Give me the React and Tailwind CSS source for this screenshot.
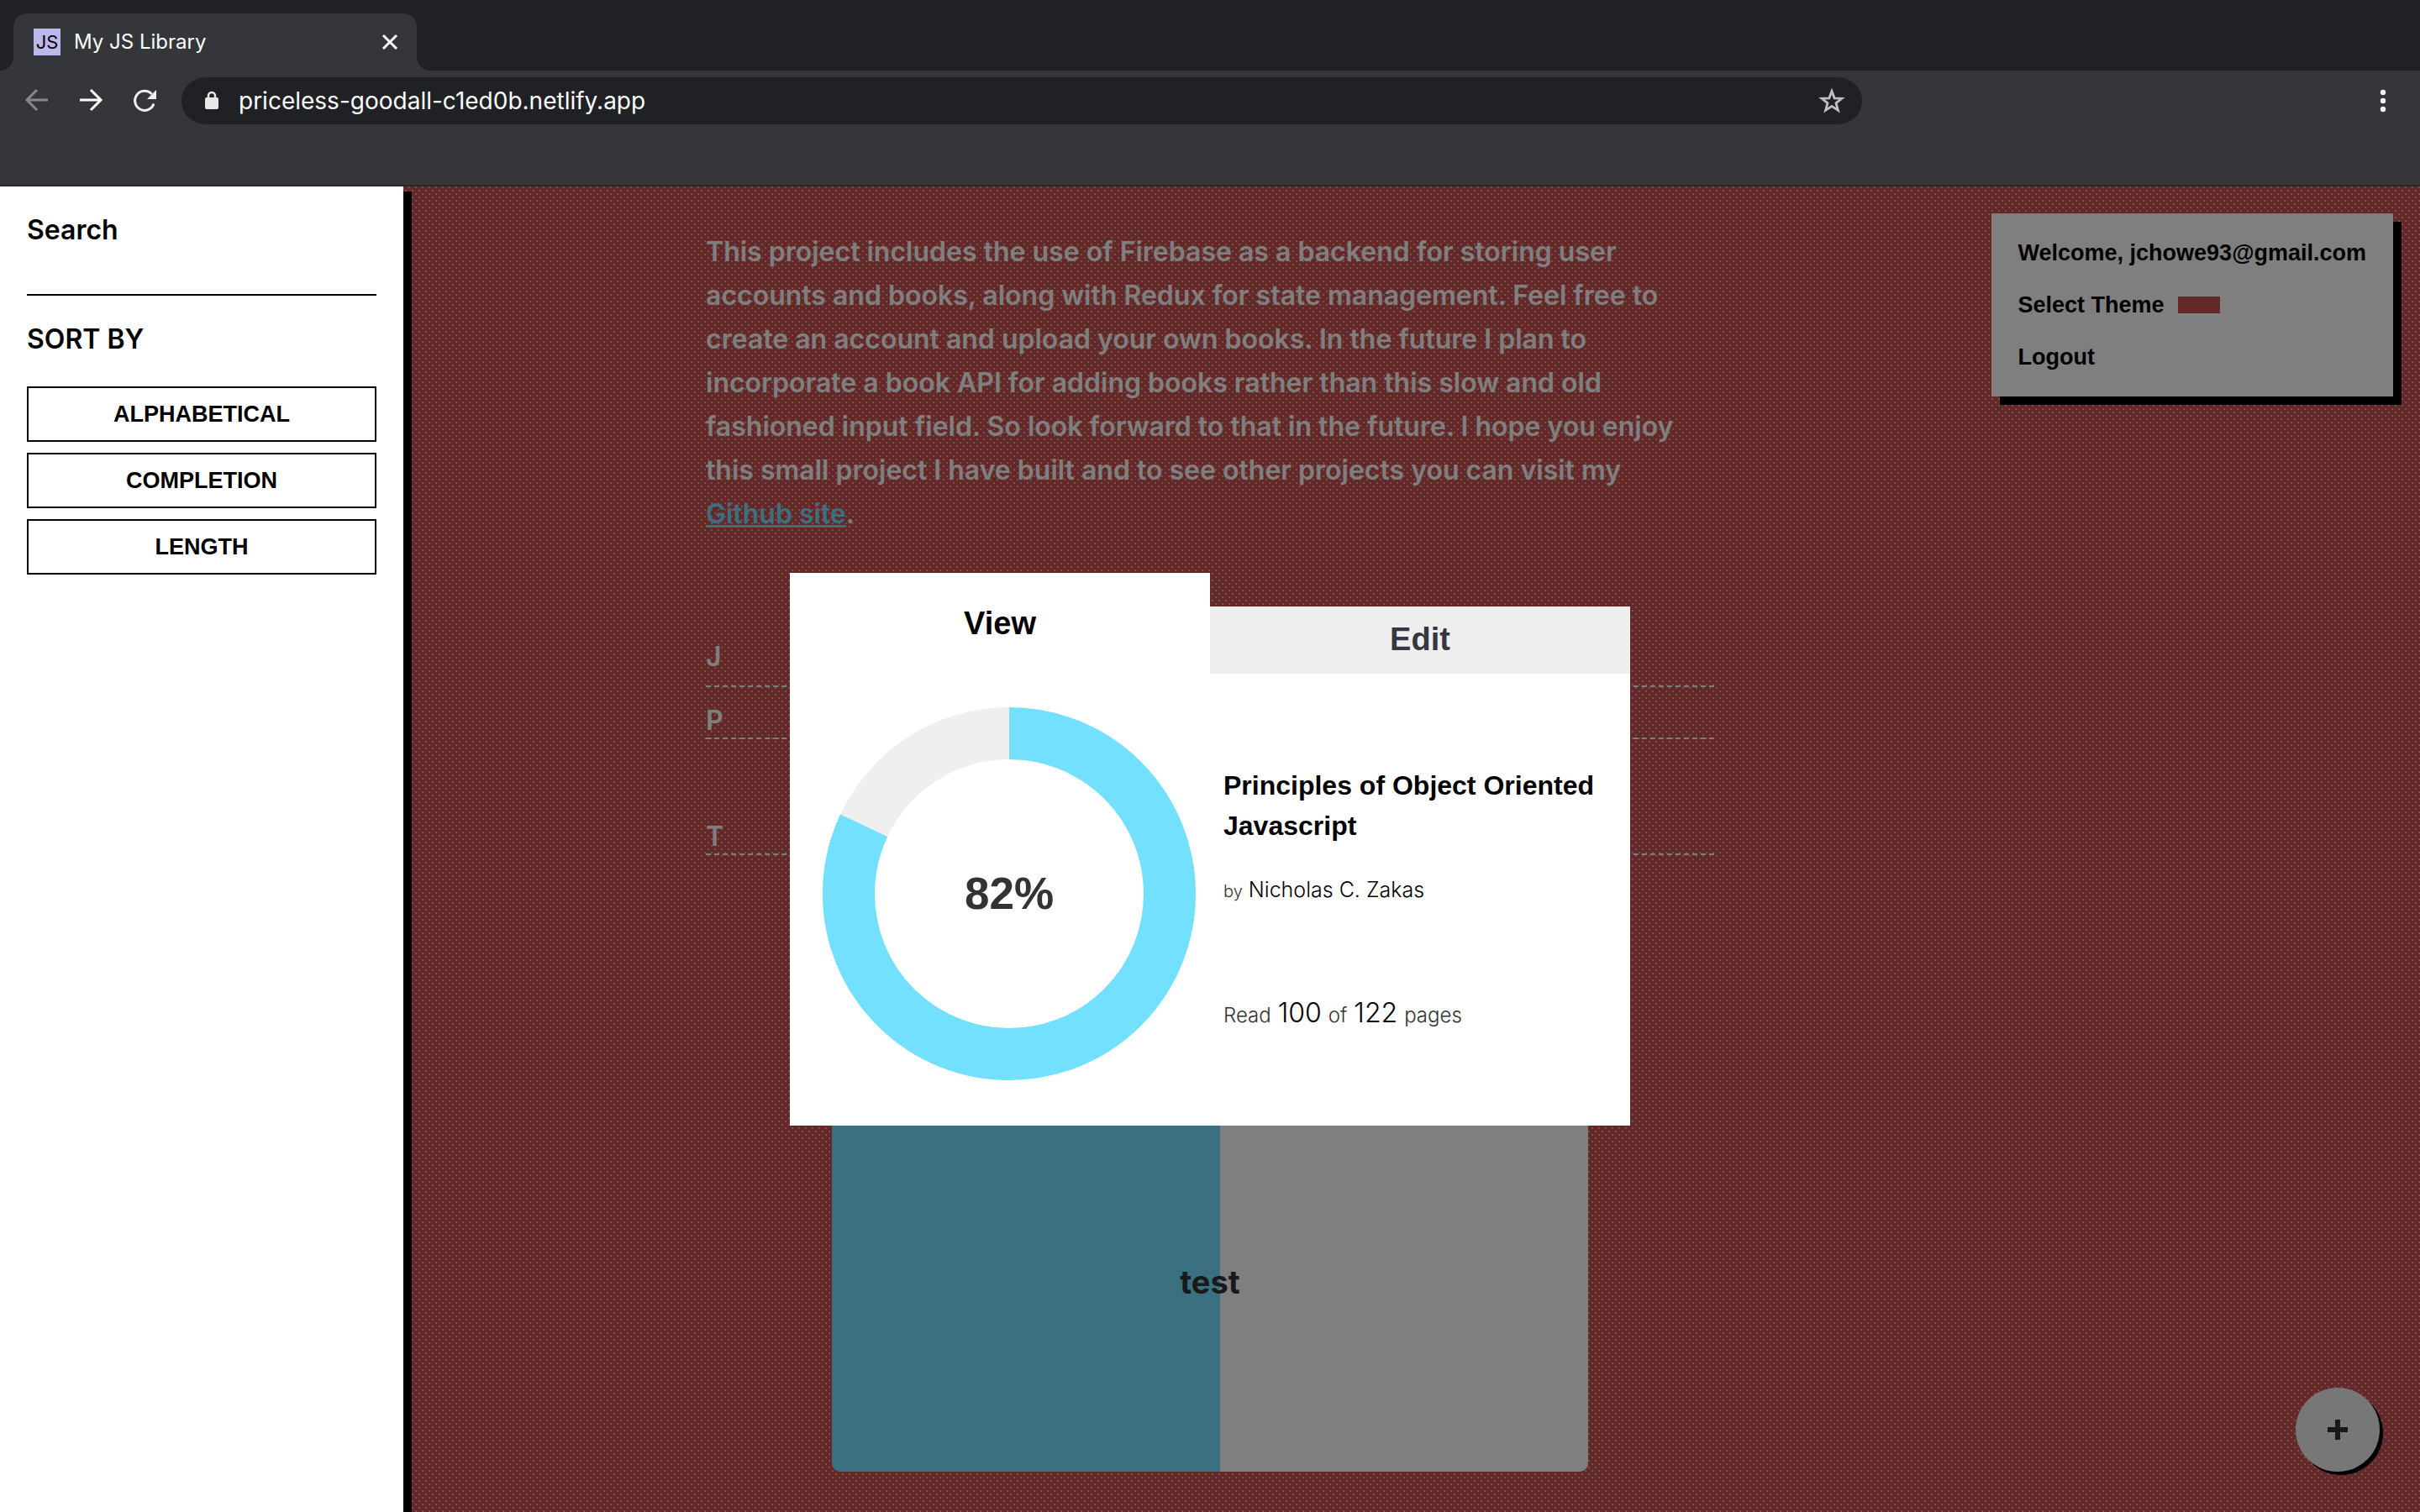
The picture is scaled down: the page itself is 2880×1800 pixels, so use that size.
function Chrome() {
  return (
    <header className="shrink-0 border-b-2 border-[#28292b] bg-[#35363a] font-[Inter,sans-serif]">
      <div className="flex h-[84px] items-end bg-[#202124] pl-4">
        <div className="relative flex h-[68px] w-[480px] items-center rounded-t-2xl bg-[#35363a] pr-5 pl-6 text-white">
          <svg className="absolute bottom-0 -left-4 size-4" viewBox="0 0 16 16" aria-hidden="true">
            <path d="M16 0v16H0A16 16 0 0 0 16 0z" fill="#35363a" />
          </svg>
          <svg className="absolute -right-4 bottom-0 size-4" viewBox="0 0 16 16" aria-hidden="true">
            <path d="M0 0v16h16A16 16 0 0 1 0 0z" fill="#35363a" />
          </svg>
          <span className="flex size-8 items-center justify-center bg-[#bbb8ea] text-[22px] text-black">JS</span>
          <span className="ml-4 text-[24px]">My JS Library</span>
          <button type="button" aria-label="Close tab" className="ml-auto">
            <svg className="size-6" viewBox="0 0 24 24" fill="none" stroke="currentColor" strokeWidth="3" aria-hidden="true">
              <path d="M4 4l16 16M20 4L4 20" />
            </svg>
          </button>
        </div>
      </div>
      <div className="flex h-[136px] items-start pt-2 pr-7 pl-7">
        <div className="flex h-14 w-full items-center">
          <button type="button" aria-label="Back" className="text-[#87888a]">
            <svg className="size-8" viewBox="0 0 32 32" fill="none" stroke="currentColor" strokeWidth="3" aria-hidden="true">
              <path d="M29 15H5M16 3L4 15l12 12" />
            </svg>
          </button>
          <button type="button" aria-label="Forward" className="ml-8 text-white">
            <svg className="size-8" viewBox="0 0 32 32" fill="none" stroke="currentColor" strokeWidth="3" aria-hidden="true">
              <path d="M3 15h24M16 3l12 12-12 12" />
            </svg>
          </button>
          <button type="button" aria-label="Reload" className="ml-8 text-[#f1f1f1]">
            <svg className="size-8" viewBox="0 0 32 32" fill="none" stroke="currentColor" strokeWidth="3" aria-hidden="true">
              <path d="M27 19.500A11.500 11.500 0 1 1 24.500 8" />
              <path d="M30 3v11H19z" fill="currentColor" stroke="none" />
            </svg>
          </button>
          <div className="ml-7 flex h-14 w-[71%] max-w-[2000px] items-center rounded-full bg-[#202124] pr-5 pl-7">
            <svg className="h-6 w-4 shrink-0" viewBox="0 0 16 24" fill="none" aria-hidden="true">
              <rect y="8" width="16" height="14" rx="2" fill="#e8e8e9" />
              <path d="M4 9V6a4 4 0 0 1 8 0v3" stroke="#e8e8e9" strokeWidth="2.500" />
            </svg>
            <input
              type="text"
              aria-label="Address"
              defaultValue="priceless-goodall-c1ed0b.netlify.app"
              className="ml-6 min-w-0 flex-1 bg-transparent text-[28px] text-white outline-none"
            />
            <button type="button" aria-label="Bookmark" className="text-[#bdc1c6]">
              <svg className="size-8" viewBox="0 0 32 32" fill="none" stroke="currentColor" strokeWidth="2.800" aria-hidden="true">
                <path d="M16 4.500l3.100 8.300 8.900.4-7 5.500 2.400 8.600L16 22.400l-7.400 4.900 2.400-8.600-7-5.500 8.900-.4z" />
              </svg>
            </button>
          </div>
          <button type="button" aria-label="Menu" className="ml-auto text-[#f1f1f1]">
            <svg className="size-8" viewBox="0 0 32 32" fill="currentColor" aria-hidden="true">
              <circle cx="16" cy="6" r="3.200" />
              <circle cx="16" cy="16" r="3.200" />
              <circle cx="16" cy="26" r="3.200" />
            </svg>
          </button>
        </div>
      </div>
    </header>
  );
}

function Sidebar() {
  return (
    <aside className="relative z-20 h-full w-[480px] bg-white px-8 pt-[26px] text-black shadow-[10px_6px_0_0_#000]">
      <label htmlFor="search" className="block font-[Inter,sans-serif] text-[32px] leading-[52px] font-semibold">
        Search
      </label>
      <input id="search" type="text" className="block h-[52px] w-full border-b-2 border-black text-[28px] outline-none" />
      <h2 className="mt-[26px] font-[Inter,sans-serif] text-[32px] leading-[52px] font-semibold">SORT BY</h2>
      <div className="mt-[30px] flex flex-col gap-[13px] font-['Liberation_Sans',sans-serif] text-[27px] leading-8 font-bold">
        <button type="button" className="h-[66px] border-2 border-black">ALPHABETICAL</button>
        <button type="button" className="h-[66px] border-2 border-black">COMPLETION</button>
        <button type="button" className="h-[66px] border-2 border-black">LENGTH</button>
      </div>
    </aside>
  );
}

function Donut({ read, total }) {
  const length = 2 * Math.PI * 191;
  const part = (read / total) * length;
  return (
    <div className="relative size-[446px]">
      <svg className="size-full -rotate-90" viewBox="0 0 446 446" fill="none" strokeWidth="62" aria-hidden="true">
        <circle cx="223" cy="223" r="191" stroke="#efefef" />
        <circle cx="223" cy="223" r="191" stroke="#74e0ff" strokeDasharray={`${part} ${length}`} />
      </svg>
      <p className="absolute inset-0 flex items-center justify-center text-[53px] font-bold text-[#333]">
        {Math.round((read / total) * 100)}%
      </p>
    </div>
  );
}

function BookModal() {
  return (
    <div className="absolute inset-0 z-10 flex items-center justify-center bg-black/50">
      <div role="dialog" aria-label="Book details" className="w-[1000px] font-['Liberation_Sans',sans-serif]">
        <div role="tablist" className="flex items-end text-[38px] font-bold">
          <button type="button" role="tab" aria-selected="true" className="h-[120px] flex-1 bg-white text-black">
            View
          </button>
          <button type="button" role="tab" aria-selected="false" className="h-20 flex-1 bg-[#eee] pb-0.5 text-[#35363f]">
            Edit
          </button>
        </div>
        <div className="flex bg-white pt-[39px] pb-[53px] pl-[38px]">
          <Donut read={100} total={122} />
          <div className="ml-8 flex-1 pt-[70px]">
            <h2 className="text-[32px] leading-[48px] font-bold text-black">
              Principles of Object Oriented
              <br />
              Javascript
            </h2>
            <p className="mt-[30px] font-[Inter,sans-serif] text-[25px] leading-[44px] font-light text-black">
              <span className="text-[20px] text-[#333]">by</span> Nicholas C. Zakas
            </p>
            <p className="mt-[101px] flex items-baseline gap-2 font-[Inter,sans-serif] text-[24px] leading-[44px] font-light text-[#333]">
              <span>Read</span>
              <span className="text-[32px] text-black">100</span>
              <span>of</span>
              <span className="text-[32px] text-black">122</span>
              <span>pages</span>
            </p>
          </div>
        </div>
      </div>
    </div>
  );
}

function AccountPanel() {
  return (
    <nav className="mt-8 mr-8 flex flex-col gap-[30px] justify-self-end self-start bg-white px-8 pt-[31px] pb-[31px] font-['Liberation_Sans',sans-serif] text-[27px] leading-8 font-bold text-black shadow-[10px_10px_0_0_#000]">
      <p>Welcome, jchowe93@gmail.com</p>
      <button type="button" className="flex items-center gap-4 text-left">
        Select Theme <span className="h-5 w-[50px] bg-[#c65252]" />
      </button>
      <button type="button" className="text-left">Logout</button>
    </nav>
  );
}

function Shelf({ letter, className }) {
  return (
    <h3 className={`border-b-2 border-dashed border-white text-[32px] leading-10 font-semibold ${className}`}>{letter}</h3>
  );
}

export default function App() {
  return (
    <div className="flex h-screen flex-col overflow-hidden">
      <Chrome />
      <div className="relative min-h-0 flex-1 overflow-hidden bg-[#c65252] bg-[conic-gradient(from_270deg_at_2px_2px,#f29e9c_90deg,transparent_0),conic-gradient(from_270deg_at_2px_2px,#f29e9c_90deg,transparent_0)] bg-size-[8px_8px] bg-position-[6px_0px,2px_4px]">
        <div className="grid h-full grid-cols-[1fr_1200px_1fr]">
          <Sidebar />
          <main className="flex flex-col pt-[52px] font-[Inter,sans-serif] text-white">
            <p className="text-[32px] leading-[52px] font-semibold">
              This project includes the use of Firebase as a backend for storing user
              <br />
              accounts and books, along with Redux for state management. Feel free to
              <br />
              create an account and upload your own books. In the future I plan to
              <br />
              incorporate a book API for adding books rather than this slow and old
              <br />
              fashioned input field. So look forward to that in the future. I hope you enjoy
              <br />
              this small project I have built and to see other projects you can visit my
              <br />
              <a href="#github" className="text-[#74e0ff] underline">
                Github site
              </a>
              .
            </p>
            <Shelf letter="J" className="mt-[124px] pb-3.5" />
            <Shelf letter="P" className="mt-5" />
            <Shelf letter="T" className="mt-24" />
            <button
              type="button"
              className="mx-[150px] mt-20 mb-12 flex min-h-0 flex-1 items-end justify-center rounded-[10px] bg-linear-to-r from-[#74e0ff] from-[462px] to-white to-[462px] pb-[197px] text-[38px] font-bold text-[#333]"
            >
              test
            </button>
          </main>
          <AccountPanel />
        </div>
        <button
          type="button"
          aria-label="Add book"
          className="absolute right-12 bottom-12 flex size-[100px] items-center justify-center rounded-full bg-[#efefef] text-[#333] shadow-[4px_4px_0_0_#000]"
        >
          <svg className="size-6" viewBox="0 0 24 24" fill="none" stroke="currentColor" strokeWidth="6" aria-hidden="true">
            <path d="M12 0v24M0 12h24" />
          </svg>
        </button>
        <BookModal />
      </div>
    </div>
  );
}
